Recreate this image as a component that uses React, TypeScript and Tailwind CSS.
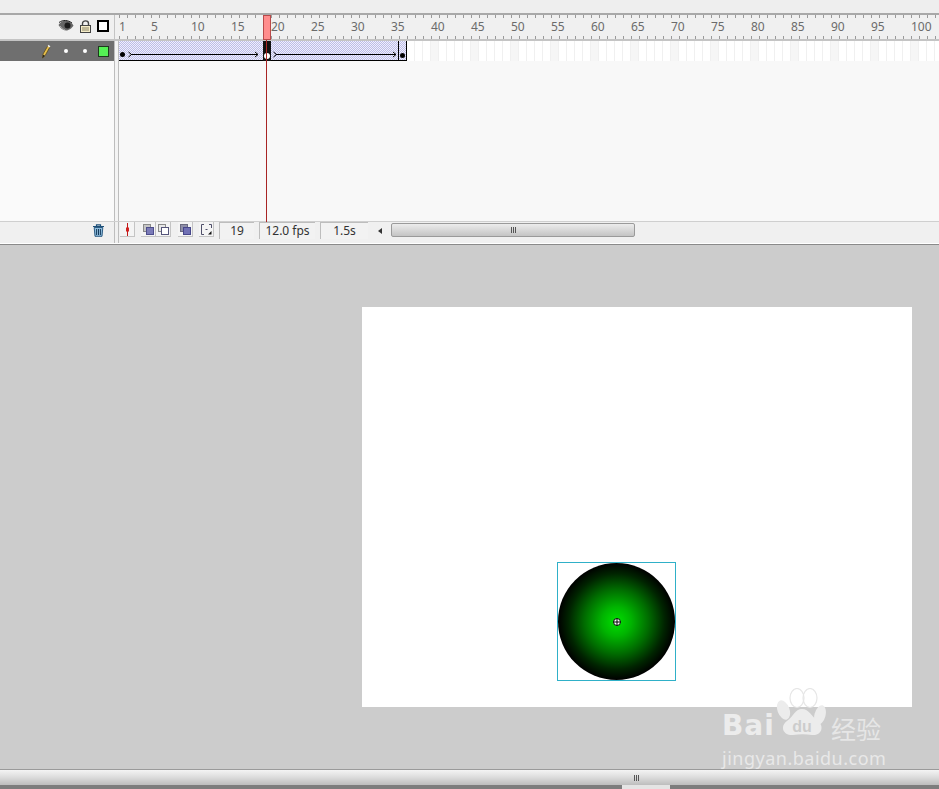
const labels = [5, 10, 15, 20, 25, 30, 35, 40, 45, 50, 55, 60, 65, 70, 75, 80, 85, 90, 95, 100];
const restFrames = Array.from({ length: 67 }, (_, i) => i + 37);

function Eye() {
  return (
    <svg width="16" height="12" viewBox="0 0 16 12">
      <path d="M0.5 5 C3 1 6 0.5 9 1 C12 1.5 14 3 15.5 5.5 C14 8 11 10.5 8 10.5 C5 10.5 2.5 8 0.5 5 Z" fill="#666" />
      <path d="M1 2.5 C5 -0.5 10 0 14 3" stroke="#222" strokeWidth="1" fill="none" />
      <circle cx="9.5" cy="5.5" r="3" fill="#1c1c1c" />
      <path d="M2 6 C4 8 5 9 7 10" stroke="#aaa" strokeWidth="1" fill="none" />
    </svg>
  );
}

function Lock() {
  return (
    <svg width="11" height="13" viewBox="0 0 11 13">
      <path d="M2.5 6 V3.5 C2.5 0 8.5 0 8.5 3.5 V6" fill="none" stroke="#444" strokeWidth="1.4" />
      <rect x="0.5" y="5.5" width="10" height="7" fill="#f5ecc8" stroke="#444" />
      <path d="M2 8 H9 M2 10 H9" stroke="#8a8468" strokeWidth="1" />
    </svg>
  );
}

function Pencil() {
  return (
    <svg width="10" height="15" viewBox="0 0 10 15">
      <path d="M1.5 14 L2 10 L7 1.5 L9 2.8 L4.2 11.5 Z" fill="#e8c04a" stroke="#5a4a20" strokeWidth="0.8" />
      <path d="M1.5 14 L2 10.8 L4 11.8 Z" fill="#222" />
      <path d="M7 1.5 L9 2.8" stroke="#eee" strokeWidth="1.5" />
    </svg>
  );
}

function Trash() {
  return (
    <svg width="13" height="13" viewBox="0 0 13 13">
      <path d="M1 2.5 H12 M4.5 2 V0.8 H8.5 V2" stroke="#1d4f78" strokeWidth="1.2" fill="none" />
      <path d="M2.2 3.5 H10.8 L10 12.3 H3 Z" fill="#8fbcdc" stroke="#1d4f78" strokeWidth="0.9" />
      <path d="M4.6 5 V11 M6.5 5 V11 M8.4 5 V11" stroke="#143a5c" strokeWidth="1" />
    </svg>
  );
}

function ToolBtn({ children }: { children: React.ReactNode }) {
  return (
    <div className="w-[15px] h-[15px] flex items-center justify-center border-r border-b border-[#c4c4c4] bg-[#f4f4f4]">
      {children}
    </div>
  );
}

function Field({ className, children }: { className: string; children: React.ReactNode }) {
  return (
    <div className={`h-[17px] flex items-center justify-center bg-[#f2f2f2] border-t border-l border-[#bdbdbd] text-[12px] leading-none text-[#333] ${className}`}>
      {children}
    </div>
  );
}

function Arrow({ width }: { width: number }) {
  return (
    <svg width={width} height="9" viewBox={`0 0 ${width} 9`} className="block">
      <path d={`M0.5 2 L3.5 4.5 L0.5 7`} fill="none" stroke="#000" strokeWidth="1" />
      <path d={`M3 4.5 H${width - 1} M${width - 4} 2 L${width - 1} 4.5 L${width - 4} 7`} fill="none" stroke="#000" strokeWidth="1" />
    </svg>
  );
}

const hatch =
  "bg-[repeating-conic-gradient(#bcbce8_0_25%,#f0f0fc_0_50%)] bg-[length:2px_2px]";

export default function App() {
  return (
    <div className="relative w-[939px] h-[789px] overflow-hidden flex flex-col bg-[#cccccc] font-['Noto_Sans','Liberation_Sans',sans-serif]">
      <div className="h-[13px] bg-[#eeeeee]" />
      <div className="h-[2px] bg-[#a8a8a8]" />

      {/* Ruler row */}
      <div className="h-[26px] flex bg-[#f0f0f0] border-b-2 border-[#c4c4c4]">
        <div className="w-[114px] shrink-0 flex items-center justify-end gap-[6px] pr-[5px] pb-[2px]">
          <Eye />
          <Lock />
          <div className="w-[12px] h-[12px] border-2 border-black bg-white" />
        </div>
        <div className="w-[5px] shrink-0 flex justify-between">
          <div className="w-px bg-[#c4c4c4]" />
          <div className="w-px" />
        </div>
        <div className="flex-1 min-w-0 overflow-hidden flex flex-col justify-between">
          <div className="h-[3px] bg-[repeating-linear-gradient(90deg,#9a9a9a_0,#9a9a9a_1px,transparent_1px,transparent_8px)]" />
          <div className="flex h-[16px] items-center text-[12px] leading-none text-[#6b6b6b]">
            <div className="w-[32px] shrink-0">1</div>
            {labels.map((n) => (
              <div key={n} className="w-[40px] shrink-0">
                {n}
              </div>
            ))}
          </div>
          <div className="h-[3px] bg-[repeating-linear-gradient(90deg,#9a9a9a_0,#9a9a9a_1px,transparent_1px,transparent_8px)]" />
        </div>
      </div>

      {/* Layers and frames */}
      <div className="h-[180px] flex bg-[#f8f8f8]">
        <div className="w-[114px] shrink-0 flex flex-col">
          <div className="h-[20px] bg-[#6f6f6f] flex items-center pl-[41px]">
            <Pencil />
            <div className="ml-[13px] w-[4px] h-[4px] rounded-full bg-white" />
            <div className="ml-[15px] w-[4px] h-[4px] rounded-full bg-white" />
            <div className="ml-[11px] w-[11px] h-[11px] bg-[#55f055] border border-[#1d3a1d]" />
          </div>
          <div className="flex-1 bg-[#fafafa]" />
        </div>
        <div className="w-[5px] shrink-0 flex justify-between bg-[#f4f4f4]">
          <div className="w-px bg-[#bdbdbd]" />
          <div className="w-px bg-[#bdbdbd]" />
        </div>
        <div className="flex-1 min-w-0 overflow-hidden flex flex-col">
          <div className="h-[20px] flex">
            <div className={`w-[144px] shrink-0 h-full border-b border-black flex items-end pb-[1px] ${hatch}`}>
              <div className="ml-[1px] mb-[2px] w-[5px] h-[5px] rounded-full bg-black" />
              <div className="ml-[3px]">
                <Arrow width={131} />
              </div>
            </div>
            <div className="w-[8px] shrink-0 h-full bg-[#111] flex items-end justify-center pb-[2px]">
              <div className="w-[6px] h-[6px] rounded-full bg-white" />
            </div>
            <div className={`w-[127px] shrink-0 h-full border-b border-black flex items-end pb-[1px] pl-[2px] ${hatch}`}>
              <Arrow width={124} />
            </div>
            <div className={`w-[9px] shrink-0 h-full border-x border-b border-black flex items-end justify-center pb-[2px] ${hatch}`}>
              <div className="w-[5px] h-[5px] rounded-full bg-black" />
            </div>
            {restFrames.map((f) => (
              <div
                key={f}
                className={f % 5 === 0 ? "w-[8px] shrink-0 h-full bg-[#f6f6f6] border-r border-[#f0f0f0]" : "w-[8px] shrink-0 h-full bg-white border-r border-[#f0f0f0]"}
              />
            ))}
          </div>
          <div className="flex-1" />
        </div>
      </div>

      {/* Footer */}
      <div className="h-[22px] flex bg-[#f0f0f0] border-t border-[#cfcfcf]">
        <div className="w-[114px] shrink-0 flex items-start justify-end pr-[9px] pt-[2px]">
          <Trash />
        </div>
        <div className="w-[5px] shrink-0 flex justify-between">
          <div className="w-px bg-[#bdbdbd]" />
          <div className="w-px bg-[#bdbdbd]" />
        </div>
        <div className="flex-1 min-w-0 flex items-start">
          <div className="ml-[1px]">
            <ToolBtn>
              <svg width="7" height="13" viewBox="0 0 7 13">
                <path d="M3.5 0 V13" stroke="#c01818" strokeWidth="1" />
                <rect x="2" y="4.5" width="3" height="4" fill="#d02020" />
              </svg>
            </ToolBtn>
          </div>
          <div className="ml-[6px] flex">
            <ToolBtn>
              <svg width="11" height="11" viewBox="0 0 11 11">
                <rect x="0.5" y="0.5" width="7" height="7" fill="#c6c6c6" stroke="#8a8a8a" />
                <rect x="3.5" y="3.5" width="7" height="7" fill="#7b7bb8" stroke="#4e4e8c" />
              </svg>
            </ToolBtn>
            <ToolBtn>
              <svg width="11" height="11" viewBox="0 0 11 11">
                <rect x="0.5" y="0.5" width="7" height="7" fill="#e8e8e8" stroke="#8a8a8a" />
                <rect x="3.5" y="3.5" width="7" height="7" fill="#fff" stroke="#55557a" />
              </svg>
            </ToolBtn>
          </div>
          <div className="ml-[7px]">
            <ToolBtn>
              <svg width="11" height="11" viewBox="0 0 11 11">
                <rect x="0.5" y="0.5" width="7" height="7" fill="#8f8fa8" stroke="#6a6a80" />
                <rect x="3.5" y="3.5" width="7" height="7" fill="#7070b4" stroke="#46468a" />
              </svg>
            </ToolBtn>
          </div>
          <div className="ml-[6px]">
            <ToolBtn>
              <svg width="11" height="11" viewBox="0 0 11 11">
                <path d="M3 0.5 H0.5 V10.5 H3 M8 0.5 H10.5 V4 M4.5 5.5 H6.5" stroke="#50506a" strokeWidth="1" fill="none" />
                <path d="M10.5 7 V10.5 H7 Z" fill="#111" />
              </svg>
            </ToolBtn>
          </div>
          <Field className="ml-[5px] w-[35px]">19</Field>
          <Field className="ml-[5px] w-[56px]">12.0 fps</Field>
          <Field className="ml-[5px] w-[48px]">1.5s</Field>
          <div className="ml-[10px] mt-[6px] w-0 h-0 border-y-[3px] border-y-transparent border-r-[4px] border-r-[#333]" />
          <div className="ml-[9px] mt-[1px] w-[244px] h-[14px] rounded-[2px] border border-[#9a9a9a] bg-[linear-gradient(#ececec,#c4c4c4)] flex items-center justify-center gap-px">
            <div className="w-px h-[6px] bg-[#555]" />
            <div className="w-px h-[6px] bg-[#555]" />
            <div className="w-px h-[6px] bg-[#555]" />
          </div>
        </div>
      </div>

      <div className="h-px bg-white" />
      <div className="h-[1px] bg-[#8a8a8a]" />

      {/* Stage */}
      <div className="h-[524px] bg-[#cccccc] pl-[362px] pt-[62px]">
        <div className="w-[550px] h-[400px] bg-white pl-[195px] pt-[255px]">
          <div className="relative w-[119px] h-[119px] border border-[#2fb0c8]">
            <div className="w-full h-full rounded-full bg-[radial-gradient(circle_closest-side,#00e000_0%,#00b400_25%,#006c00_55%,#002400_82%,#000000_100%)]" />
            <div className="absolute left-[55px] top-[55px] w-[8px] h-[8px] rounded-full bg-white border border-black flex items-center justify-center">
              <svg width="6" height="6" viewBox="0 0 6 6" className="block">
                <path d="M3 0 V6 M0 3 H6" stroke="#000" strokeWidth="1" />
              </svg>
            </div>
          </div>
        </div>
      </div>

      {/* Bottom scrollbar */}
      <div className="h-px bg-[#9a9a9a]" />
      <div className="h-[15px] bg-[linear-gradient(#f4f4f4,#dedede_45%,#bdbdbd)] flex items-center justify-center pl-[334px] gap-px">
        <div className="w-px h-[6px] bg-[#555]" />
        <div className="w-px h-[6px] bg-[#555]" />
        <div className="w-px h-[6px] bg-[#555]" />
      </div>
      <div className="flex-1 bg-[#7d7d7d] pl-[622px]">
        <div className="w-[48px] h-full bg-[#e4e4e4]" />
      </div>

      {/* Playhead */}
      <div className="absolute left-[263px] top-[15px] w-[8px] h-[25px] bg-[#ff8d8d] border border-[#b84a4a]" />
      <div className="absolute left-[266px] top-[40px] w-px h-[182px] bg-[#a82424]" />

      {/* Watermark */}
      <div className="absolute left-[720px] top-[688px] w-[170px] h-[80px] text-[#ececec]">
        <div className="absolute left-[2px] top-[20px] text-[28px] leading-[36px] tracking-[1px] font-bold font-['DejaVu_Sans',sans-serif]">Bai</div>
        <svg className="absolute left-[55px] top-0" width="52" height="50" viewBox="0 0 52 50">
          <ellipse cx="22" cy="10" rx="7" ry="9.5" fill="none" stroke="#e6e6e6" strokeWidth="1.2" />
          <ellipse cx="35" cy="10" rx="7" ry="9.5" fill="none" stroke="#e6e6e6" strokeWidth="1.2" />
          <ellipse cx="8.5" cy="22" rx="6" ry="10" fill="#ececec" transform="rotate(-20 8.5 22)" />
          <ellipse cx="45" cy="27" rx="5.5" ry="10" fill="#ececec" transform="rotate(15 45 27)" />
          <path d="M27 21 C20 21 18 29 12 33 C4 39 9 48 18 47 C24 46 31 46 37 47 C46 48 50 39 43 33 C37 29 34 21 27 21 Z" fill="#ececec" />
          <text x="27" y="44" textAnchor="middle" fontSize="16" fontWeight="700" fill="#cccccc" fontFamily="Liberation Sans, sans-serif">du</text>
        </svg>
        <div className="absolute left-[111px] top-[24px] text-[25px] leading-[32px] font-['Noto_Sans_CJK_SC',sans-serif] text-[#e6e6e6]">经验</div>
        <div className="absolute left-[2px] top-[59px] text-[18px] leading-[22px] tracking-[0.5px] text-[#e8e8e8]">jingyan.baidu.com</div>
      </div>
    </div>
  );
}
